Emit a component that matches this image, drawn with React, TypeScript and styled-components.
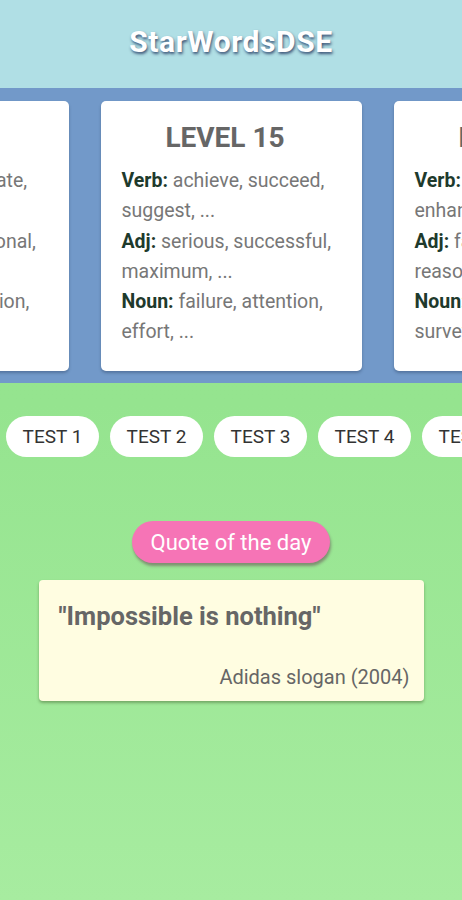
import styled, { createGlobalStyle } from "styled-components";

const GlobalStyle = createGlobalStyle`
  html, body {
    margin: 0;
    padding: 0;
  }
  body {
    font-family: Roboto, "Noto Sans", Arial, sans-serif;
  }
`;

const Page = styled.div`
  width: 462px;
  min-height: 900px;
  display: flex;
  flex-direction: column;
  background: linear-gradient(180deg, #93e38d 0%, #95e48f 45%, #a7eca0 100%);
  overflow: hidden;
`;

const Header = styled.header`
  height: 88px;
  background: #b0dfe5;
  display: flex;
  align-items: center;
  justify-content: center;
`;

const Title = styled.h1`
  margin: 0;
  font-size: 30px;
  font-weight: 700;
  letter-spacing: 0.6px;
  color: #fff;
  text-shadow: 1px 2px 3px rgba(40, 60, 100, 0.85);
  padding-bottom: 6px;
`;

const Band = styled.section`
  background: #7299c9;
  padding: 13px 0 12px;
  display: flex;
  justify-content: center;
  gap: 32px;
  overflow: hidden;
`;

const LevelCard = styled.div`
  flex: 0 0 261px;
  height: 270px;
  box-sizing: border-box;
  background: #fff;
  border-radius: 5px;
  box-shadow: 0 2px 3px rgba(30, 50, 80, 0.35);
  padding: 19px 12px 0 21px;
`;

const LevelTitle = styled.h2`
  margin: 0 0 10px;
  text-align: center;
  font-size: 28px;
  font-weight: 700;
  color: #666;
  line-height: 36px;
  padding-right: 21px;
`;

const WordLine = styled.p`
  margin: 0;
  font-size: 19.5px;
  line-height: 30.3px;
  color: #777;
  white-space: nowrap;
`;

const Label = styled.b`
  color: #1e3a2c;
  font-weight: 700;
`;

const Tests = styled.nav`
  display: flex;
  gap: 11px;
  padding: 33px 0 0 6px;
  overflow: hidden;
`;

const TestPill = styled.div`
  flex: 0 0 auto;
  width: 93px;
  height: 41px;
  box-sizing: border-box;
  border-radius: 21px;
  background: #fff;
  display: flex;
  align-items: center;
  justify-content: center;
  font-size: 19px;
  color: #333;
`;

const QuoteSection = styled.section`
  display: flex;
  flex-direction: column;
  align-items: center;
  padding-top: 64px;
`;

const QuoteBadge = styled.div`
  width: 198px;
  height: 42px;
  border-radius: 21px;
  background: #f674b6;
  box-shadow: 1px 3px 3px rgba(90, 40, 70, 0.45);
  color: #fff;
  font-size: 22px;
  display: flex;
  align-items: center;
  justify-content: center;
  margin-bottom: 17px;
`;

const QuoteCard = styled.div`
  width: 385px;
  height: 121px;
  box-sizing: border-box;
  background: #fffde1;
  border-radius: 4px;
  box-shadow: 0 2px 3px rgba(60, 90, 40, 0.45);
  padding: 19px 14px 0 20px;
  display: flex;
  flex-direction: column;
`;

const QuoteText = styled.div`
  font-size: 25.5px;
  font-weight: 700;
  color: #666;
  line-height: 34px;
`;

const QuoteAuthor = styled.div`
  margin-top: auto;
  margin-bottom: 12px;
  text-align: right;
  font-size: 20px;
  color: #666;
`;

const levels = [
  {
    title: "LEVEL 14",
    lines: [
      ["Verb:", " operate, indicate,"],
      ["", "argue, ..."],
      ["Adj:", " national, additional,"],
      ["", "basic, ..."],
      ["Noun:", " opinion, session,"],
      ["", "issue, ..."],
    ],
  },
  {
    title: "LEVEL 15",
    lines: [
      ["Verb:", " achieve, succeed,"],
      ["", "suggest, ..."],
      ["Adj:", " serious, successful,"],
      ["", "maximum, ..."],
      ["Noun:", " failure, attention,"],
      ["", "effort, ..."],
    ],
  },
  {
    title: "LEVEL 16",
    lines: [
      ["Verb:", " improve, increase,"],
      ["", "enhance, ..."],
      ["Adj:", " familiar, efficient,"],
      ["", "reasonable, ..."],
      ["Noun:", " research, method,"],
      ["", "survey, ..."],
    ],
  },
];

const tests = ["TEST 1", "TEST 2", "TEST 3", "TEST 4", "TEST 5"];

export default function App() {
  return (
    <>
      <GlobalStyle />
      <Page>
        <Header>
          <Title>StarWordsDSE</Title>
        </Header>
        <Band>
          {levels.map((level) => (
            <LevelCard key={level.title}>
              <LevelTitle>{level.title}</LevelTitle>
              {level.lines.map(([label, words], i) => (
                <WordLine key={i}>
                  {label && <Label>{label}</Label>}
                  {words}
                </WordLine>
              ))}
            </LevelCard>
          ))}
        </Band>
        <Tests>
          {tests.map((t) => (
            <TestPill key={t}>{t}</TestPill>
          ))}
        </Tests>
        <QuoteSection>
          <QuoteBadge>Quote of the day</QuoteBadge>
          <QuoteCard>
            <QuoteText>"Impossible is nothing"</QuoteText>
            <QuoteAuthor>Adidas slogan (2004)</QuoteAuthor>
          </QuoteCard>
        </QuoteSection>
      </Page>
    </>
  );
}
